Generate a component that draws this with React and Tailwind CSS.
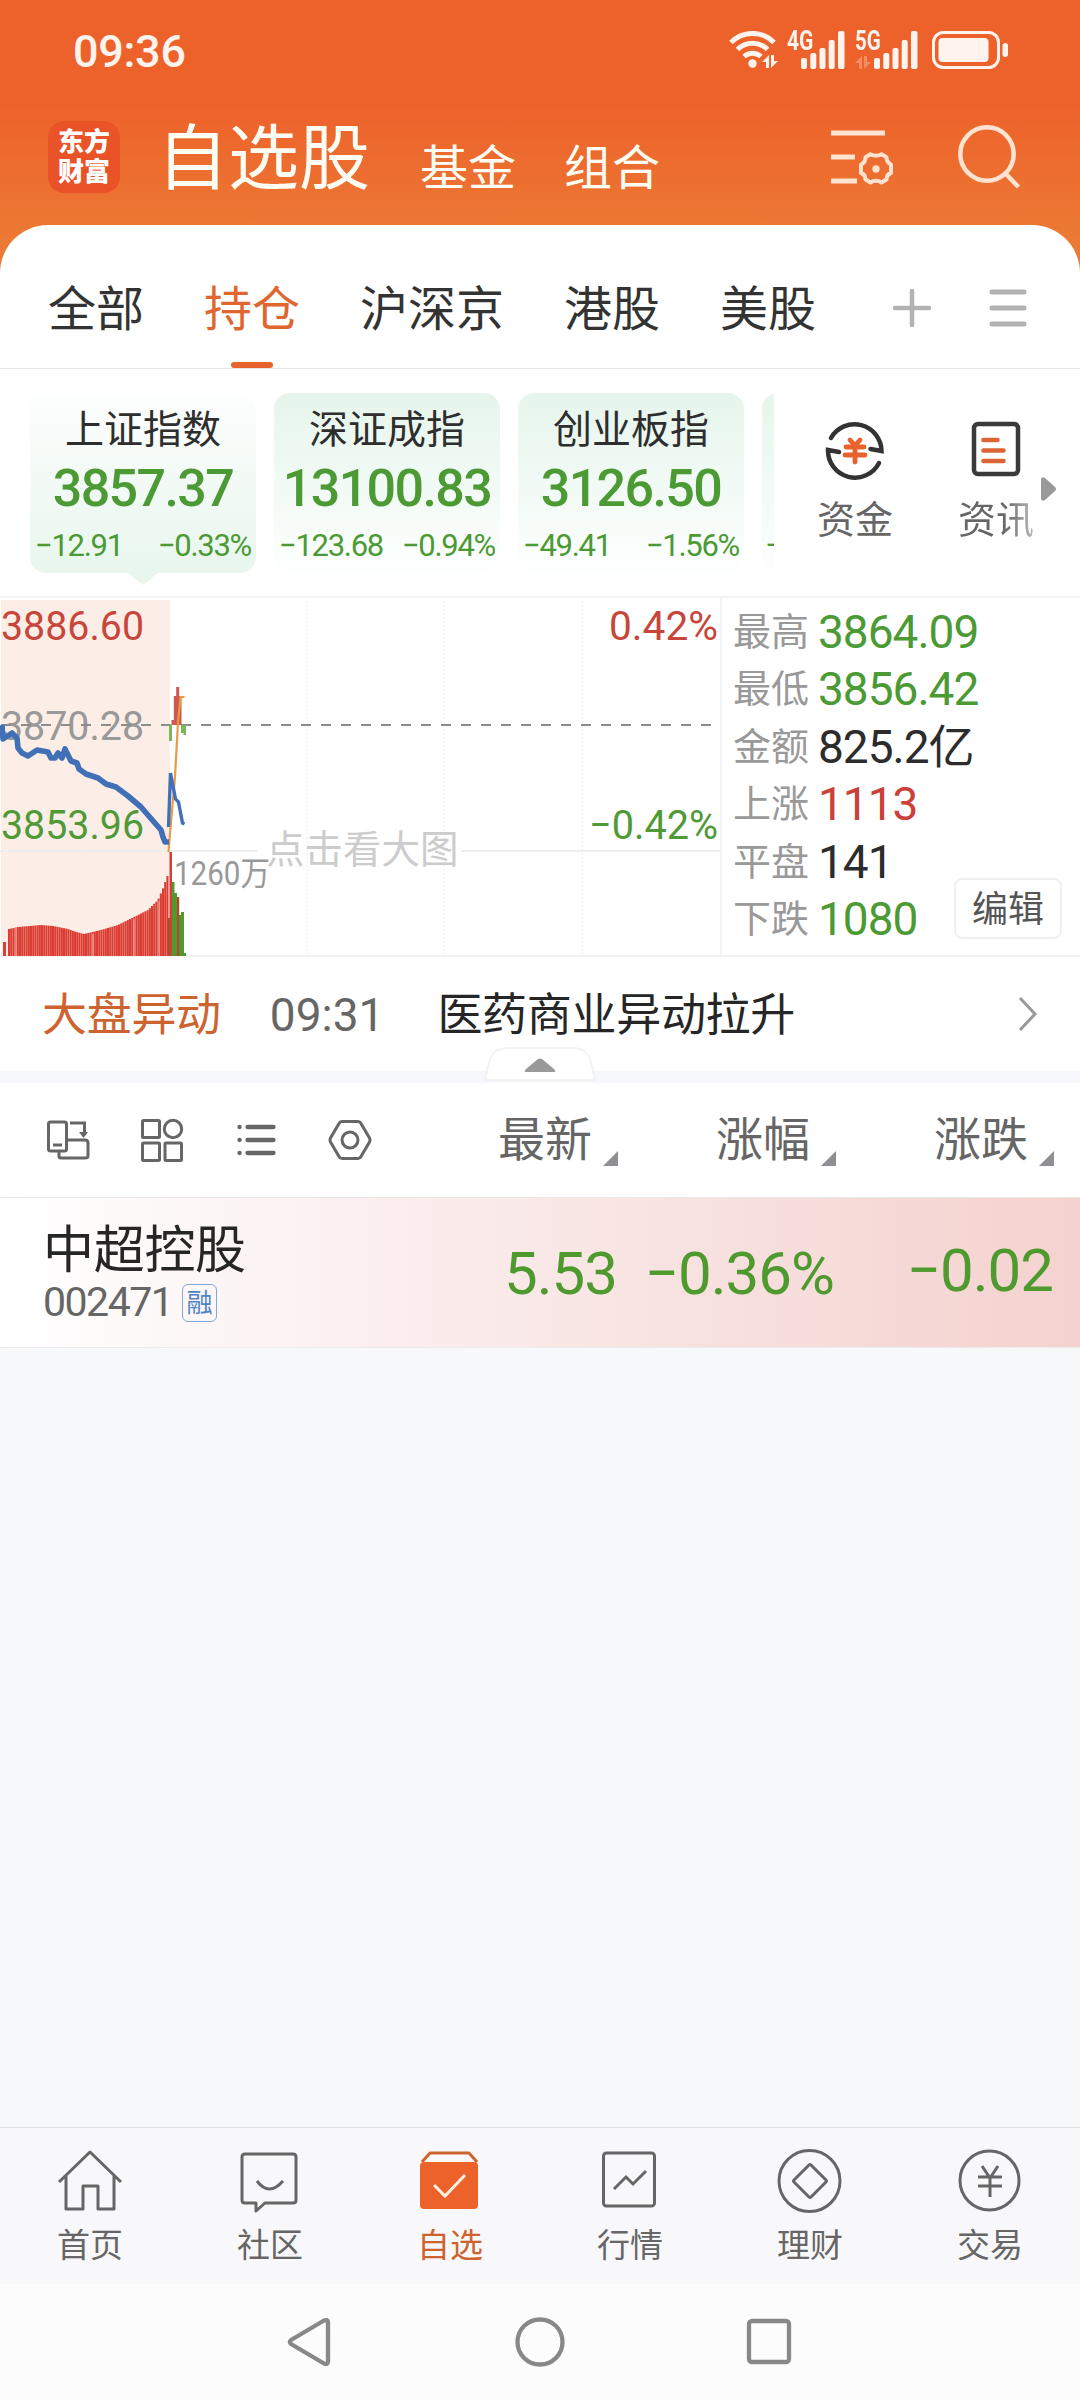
const TABS = ["全部", "持仓", "沪深京", "港股", "美股"];

const INDICES = [
  { name: "上证指数", value: "3857.37", change: "−12.91", pct: "−0.33%", active: true },
  { name: "深证成指", value: "13100.83", change: "−123.68", pct: "−0.94%" },
  { name: "创业板指", value: "3126.50", change: "−49.41", pct: "−1.56%" },
];

const STATS = [
  { label: "最高", value: "3864.09", color: "text-[#4b9a34]" },
  { label: "最低", value: "3856.42", color: "text-[#4b9a34]" },
  { label: "金额", value: "825.2亿", color: "text-[#2c2c2c]" },
  { label: "上涨", value: "1113", color: "text-[#cb4038]" },
  { label: "平盘", value: "141", color: "text-[#2c2c2c]" },
  { label: "下跌", value: "1080", color: "text-[#4b9a34]" },
];

const COLUMNS = ["最新", "涨幅", "涨跌"];

// Pre-open volume outline: [x, top]
const VOLUME = [
  [8, 331], [17, 329], [40, 327], [52, 328], [67, 331], [72, 333], [83, 336],
  [100, 332], [117, 327], [133, 319], [147, 312], [157, 302], [160, 295],
  [163, 288], [166, 278], [168, 278],
];

const volumeTop = (x) => {
  const i = VOLUME.findIndex(([vx]) => vx >= x);
  if (i <= 0) return VOLUME[0][1];
  const [x0, y0] = VOLUME[i - 1];
  const [x1, y1] = VOLUME[i];
  return y0 + ((y1 - y0) * (x - x0)) / (x1 - x0);
};

const BARS = Array.from({ length: 73 }, (_, i) => 8 + i * 2.2);

const SignalBars = () => (
  <svg width="44" height="38" viewBox="0 0 44 38" fill="#fff3ee">
    <rect x="0" y="27" width="6" height="11" rx="2" />
    <rect x="9.3" y="22" width="6" height="16" rx="2" />
    <rect x="18.5" y="17" width="6" height="21" rx="2" />
    <rect x="27.7" y="9" width="6" height="29" rx="2" />
    <rect x="37" y="0" width="6.5" height="38" rx="2" />
  </svg>
);

const DataArrows = ({ className }) => (
  <svg width="16" height="13" viewBox="0 0 16 13" fill="currentColor" className={className}>
    <path d="M7 0v13H4V7H0zM9 13V0h3v6h4z" />
  </svg>
);

function StatusBar() {
  return (
    <div className="flex h-[100px] items-center justify-between pl-[73px] pr-[71px] text-[#fff3ee]">
      <span className="mt-[2px] text-[45px] font-medium leading-none tracking-[-0.3px]">09:36</span>
      <div className="flex h-[38px] items-start">
        <div className="relative mr-[10px]">
          <svg width="48" height="38" viewBox="0 0 48 38" fill="none" stroke="#fff3ee" strokeWidth="5">
            <path d="M2 11.5a30 30 0 0 1 43 0" />
            <path d="M8.5 18.5a21 21 0 0 1 30 0" />
            <path d="M15 25.5a12.5 12.5 0 0 1 17 0" />
            <circle cx="23.5" cy="32.5" r="4.2" fill="#fff3ee" stroke="none" />
          </svg>
          <DataArrows className="absolute -right-px bottom-px" />
        </div>
        <div className="relative w-[58px] pl-[14px]">
          <span className="absolute left-0 top-0 origin-left scale-x-[0.78] text-[27px] font-bold leading-[20px]">
            4G
          </span>
          <SignalBars />
        </div>
        <div className="relative ml-[10px] w-[64px] pl-[19px]">
          <span className="absolute left-0 top-0 origin-left scale-x-[0.76] text-[27px] font-bold leading-[20px]">
            5G
          </span>
          <DataArrows className="absolute bottom-0 left-0 text-[#f68d62]" />
          <SignalBars />
        </div>
        <svg width="77" height="38" viewBox="0 0 77 38" className="ml-[13px]">
          <rect x="1.5" y="1.5" width="65" height="35" rx="10" fill="none" stroke="#fff3ee" strokeWidth="3" />
          <rect x="6.5" y="7" width="50" height="24" rx="4" fill="#fff3ee" />
          <rect x="70.5" y="12" width="5.5" height="14" rx="2.7" fill="#fff3ee" />
        </svg>
      </div>
    </div>
  );
}

function Header() {
  return (
    <header className="flex h-[125px] items-start pl-12 pt-[21px] text-[#fffdf3]">
      <div className="flex size-[72px] flex-col items-center justify-center rounded-2xl bg-[#ea5228] text-[26px] font-black leading-[30px] text-white">
        <span>东方</span>
        <span>财富</span>
      </div>
      <h1 className="ml-[37px] mt-[2px] text-[71px] leading-[72px]">自选股</h1>
      <span className="ml-[50px] mt-[24px] text-5xl leading-none">基金</span>
      <span className="ml-12 mt-[24px] text-5xl leading-none">组合</span>
      <svg width="64" height="58" viewBox="0 0 64 58" fill="none" stroke="#ffe3d0" strokeWidth="5" className="ml-[171px] mt-[7px]">
        <path d="M0 5h54M0 29h24M0 53h26" />
        <path
          d="M39.5 26.3q2.700 1.500 5.500 1.500t5.500-1.500l5 3q0 5 4.500 7.200v8.500q-4.500 1.500-4.500 6.500l-5 3q-2.500-1.700-5.500-1.700t-5.500 1.700l-5-3q0-5-4.500-6.500v-8.500q4.500-2 4.500-7.200z"
          strokeWidth="4"
          strokeLinejoin="round"
        />
        <circle cx="45" cy="41" r="3.7" fill="#ffe3d0" stroke="none" />
      </svg>
      <svg width="64" height="66" viewBox="0 0 64 66" fill="none" stroke="#ffe3d0" strokeWidth="4.5" className="ml-[63px] mt-[3px]">
        <circle cx="29" cy="30" r="26.7" />
        <path d="M47 49l13.5 14" />
      </svg>
    </header>
  );
}

function TabBar() {
  return (
    <div className="flex h-36 items-center border-b border-[#e6e6e6] pl-12 pt-[22px]">
      <div className="flex gap-[60px] pt-[4px]">
        {TABS.map((tab) => (
          <div
            key={tab}
            className={
              tab === "持仓"
                ? "relative text-5xl leading-none text-[#e0662f]"
                : "text-5xl leading-none text-[#333]"
            }
          >
            {tab}
            {tab === "持仓" && (
              <span className="absolute -bottom-[34px] left-[27px] h-[6px] w-[42px] rounded-full bg-[#e8622e]" />
            )}
          </div>
        ))}
      </div>
      <svg width="40" height="40" viewBox="0 0 40 40" stroke="#b2b2b2" strokeWidth="4.5" strokeLinecap="round" className="ml-[76px]">
        <path d="M20 3v34M3 20h34" />
      </svg>
      <svg width="38" height="40" viewBox="0 0 38 40" stroke="#b2b2b2" strokeWidth="5" strokeLinecap="round" className="ml-[57px]">
        <path d="M3 4h32M3 20h32M3 36h32" />
      </svg>
    </div>
  );
}

function IndexCard({ name, value, change, pct, active }) {
  return (
    <div
      className={`relative flex h-[180px] w-[226px] shrink-0 flex-col items-center rounded-2xl ${
        active
          ? "bg-linear-to-b from-[#fdfefe] to-[#e8f6ed]"
          : "bg-linear-to-b from-[#e6f5ec] to-[#fdfffe]"
      }`}
    >
      <span className="mt-[18px] text-[39px] leading-none text-[#2e2e2e]">{name}</span>
      <span className="mt-[13px] text-[52px] font-medium leading-[52px] tracking-[-1.6px] text-[#4b9a34]">
        {value}
      </span>
      <div className="mt-[15px] flex w-full justify-between whitespace-nowrap px-[5px] text-[31px] leading-none tracking-[-1.3px] text-[#4b9a34]">
        <span>{change}</span>
        <span>{pct}</span>
      </div>
      {active && (
        <svg width="30" height="12" viewBox="0 0 30 12" className="absolute -bottom-[12px] left-[98px]">
          <path d="M0 0h30L15 12z" fill="#e8f6ed" />
        </svg>
      )}
    </div>
  );
}

function IndexStrip() {
  return (
    <div className="flex h-[227px] pt-6">
      <div className="flex w-[774px] gap-[18px] overflow-hidden pl-[30px]">
        {INDICES.map((item) => (
          <IndexCard key={item.name} {...item} />
        ))}
        <div className="h-[180px] w-[226px] shrink-0 rounded-2xl bg-linear-to-b from-[#e6f5ec] to-[#fdfffe] pl-[5px] pt-[135px] text-[31px] leading-none text-[#4b9a34]">
          -
        </div>
      </div>

      <div className="ml-[42px] flex w-[78px] flex-col items-center pt-[27px]">
        <svg width="60" height="62" viewBox="0 0 60 62" fill="none" stroke="#333" strokeWidth="4.500" strokeLinecap="round">
          <path d="M6 18A27 27 0 0 1 56.5 31l-11-2" strokeLinejoin="miter" />
          <path d="M54 43A27 27 0 0 1 3 30l11 2" strokeLinejoin="miter" />
          <g stroke="#e8622e" strokeWidth="4.8">
            <path d="M25 20l5 5.5 5-5.500M21 27h18M20 35h20M30 27v15" />
          </g>
        </svg>
        <span className="mt-[19px] text-[38px] leading-none text-[#666]">资金</span>
      </div>
      <div className="ml-[63px] flex w-[78px] flex-col items-center pt-[28px]">
        <svg width="50" height="56" viewBox="0 0 50 56" fill="none" strokeLinecap="round">
          <rect x="3" y="3" width="44" height="50" rx="4" stroke="#3a3a3a" strokeWidth="4.5" />
          <path d="M12.5 19h14M12.5 29.500h20M12.5 40h20" stroke="#dd6436" strokeWidth="4.5" />
        </svg>
        <span className="mt-[24px] bg-linear-to-r from-[#666] from-60% to-[#bbb] bg-clip-text text-[38px] leading-none text-transparent">
          资讯
        </span>
      </div>
      <svg width="16" height="26" viewBox="0 0 16 26" className="ml-[6px] mt-[83px]">
        <path d="M0 3q1-3 4-1l10 9q2 2 0 4L4 24q-3 2-4-1z" fill="#999" />
      </svg>
    </div>
  );
}

function MinuteChart() {
  return (
    <svg width="720" height="358" viewBox="0 0 720 358" className="shrink-0">
      <rect x="1" y="2" width="169" height="355" fill="#fceee6" />
      <g stroke="#ededed" strokeDasharray="2 2">
        <path d="M87 3v355M307 3v355M444.5 3v355M582.5 3v355" />
      </g>
      <path d="M0 253h257M461 253h259" stroke="#eee" strokeWidth="2" />

      <g fontSize="41">
        <text x="1" y="42" fill="#c8453b" textLength="143" lengthAdjust="spacingAndGlyphs">3886.60</text>
        <text x="1" y="142" fill="#999" textLength="143" lengthAdjust="spacingAndGlyphs">3870.28</text>
        <text x="1" y="241" fill="#4f9a36" textLength="143" lengthAdjust="spacingAndGlyphs">3853.96</text>
        <text x="609" y="42" fill="#c8453b" textLength="109" lengthAdjust="spacingAndGlyphs">0.42%</text>
        <text x="589" y="241" fill="#4f9a36" textLength="129" lengthAdjust="spacingAndGlyphs">−0.42%</text>
      </g>
      <path d="M1 127h714" stroke="#8c8c8c" strokeWidth="2" strokeDasharray="10 10" />

      {/* volume */}
      <g fill="#db3d33">
        <rect x="3" y="344" width="3" height="14" />
        {BARS.map((x) => (
          <rect key={x} x={x} y={volumeTop(x)} width="2.08" height={358 - volumeTop(x)} />
        ))}
      </g>
      <path d="M15.500 330h1v28h-1zM92.500 336h1v22h-1zM133.500 321h1v37h-1zM158.500 303h1v55h-1z" fill="#f6b5ac" />
      <rect x="168" y="320" width="2" height="38" fill="#8a5a28" />
      <rect x="169.500" y="254" width="2.500" height="104" fill="#d83c34" />
      <path d="M172 284h2.500v11h2.500v63h-5zM179 317h2v-3h3v44h-5zM184 355h2v3h-2z" fill="#4f9a2c" />
      <path d="M177 299h2.200v59H177z" fill="#b8452c" />

      {/* deviation bars */}
      <path d="M171.500 122h2.300V98h2.400v-9h3v9h2.300v29h-10z" fill="#cf5850" />
      <path d="M169 127h3v16h-3zM181 127h2.500v8H181zM183.500 127h2.500v10h-2.500z" fill="#78b65a" />

      <path d="M168.500 254l2.500-30 4-45 3-55 2.500-25h4" fill="none" stroke="#eb9a43" strokeWidth="2.200" />
      <path
        d="M2 127l1 14 9-6 5 5 1 10 4 5 6 3 9-6 11 2 3 6h4l3-5 4 5 3-9 6 12 6 2 2 6 7 5 12 4 8 6 10 3 12 9 13 11 13 15 7 8 2 7 2 5h4"
        fill="none"
        stroke="#4270b6"
        strokeWidth="5.600"
        strokeLinejoin="round"
      />
      <path d="M168.500 229l2-54 5 26 3 3 4 21 2 1" fill="none" stroke="#4270b6" strokeWidth="3.400" />

      <text x="174" y="287" fontSize="33" fill="#999" textLength="96" lengthAdjust="spacingAndGlyphs">1260万</text>
      <text x="266" y="265" fontSize="38.5" fill="#ccc">点击看大图</text>
    </svg>
  );
}

function MarketPanel() {
  return (
    <div className="flex h-[361px] border-y-2 border-[#f2f2f2]">
      <MinuteChart />
      <div className="relative flex-1 border-l-2 border-[#f3f3f3] pl-[11px] pt-[5px]">
        {STATS.map((s) => (
          <div key={s.label} className="flex h-[57.5px] items-center">
            <span className="w-[85px] text-[38px] leading-none text-[#999]">{s.label}</span>
            <span className={`text-[46px] leading-none tracking-[-1px] ${s.color}`}>{s.value}</span>
          </div>
        ))}
        <button className="absolute bottom-[16px] right-[18px] flex h-[61px] w-[108px] items-center justify-center rounded-lg border-2 border-[#f0f0f0] bg-white pt-[3px] text-[36px] leading-none text-[#555]">
          编辑
        </button>
      </div>
    </div>
  );
}

function NewsRow() {
  return (
    <div className="relative flex h-[126px] items-start border-b-12 border-[#f6f8fb] pl-[42px] pt-[36px]">
      <span className="text-[45px] leading-none tracking-[-0.3px] text-[#cd642f]">大盘异动</span>
      <span className="ml-[49px] -mt-px text-[46px] leading-none text-[#666]">09:31</span>
      <span className="ml-[53px] text-[45px] leading-none tracking-[-0.3px] text-[#262626]">医药商业异动拉升</span>
      <svg width="20" height="36" viewBox="0 0 20 36" fill="none" stroke="#999" strokeWidth="3" className="ml-auto mr-[42px] mt-[3px]">
        <path d="M2 2l15 16L2 34" />
      </svg>
      {/* collapse handle */}
      <svg width="112" height="36" viewBox="0 0 112 36" className="absolute -bottom-[11px] left-[484px]">
        <path d="M1 34C5 14 6 2 24 2h65c17 0 18 12 22 32z" fill="#fff" stroke="#f2f2f3" strokeWidth="2" />
        <path d="M41 26q-1-1 1-3l12-10q2-1 4 0l12 10q2 2 1 3z" fill="#999" />
      </svg>
    </div>
  );
}

function ListToolbar() {
  return (
    <div className="flex h-[115px] items-center border-b border-[#e8e8e8] pl-[46px] text-[#666]">
      <div className="flex items-center">
        <svg width="44" height="44" viewBox="0 0 44 44" fill="none" stroke="currentColor" strokeWidth="3">
          <rect x="2.500" y="4" width="18" height="29" rx="2" />
          <path d="M7 27h9M24 5h14.500v12" />
          <path d="M33 14h9l-4.500 6z" fill="currentColor" stroke="none" />
          <path d="M20.500 22H39q3 0 3 3v13q0 2-3 2H15q-2 0-2-2v-5" />
        </svg>
        <svg width="44" height="44" viewBox="0 0 44 44" fill="none" stroke="currentColor" strokeWidth="3" className="ml-[50px]">
          <rect x="2.500" y="2.500" width="17" height="17" rx="1" />
          <circle cx="33" cy="11" r="8.700" />
          <rect x="2.500" y="25" width="17" height="17.500" rx="1" />
          <rect x="25" y="25" width="16.500" height="17.500" rx="1" />
        </svg>
        <svg width="40" height="36" viewBox="0 0 40 36" fill="none" stroke="currentColor" strokeWidth="4.300" strokeLinecap="round" className="ml-[52px]">
          <path d="M11.500 5h26M11.500 18h26M11.500 31h26M3.500 5h.1M3.500 18h.1M3.500 31h.1" />
        </svg>
        <svg width="44" height="42" viewBox="0 0 44 42" fill="none" stroke="currentColor" strokeWidth="3" className="ml-[52px]">
          <path d="M14 2.500h16q2 0 3 2l8.500 14.500q1 2 0 4L33 37.500q-1 2-3 2H14q-2 0-3-2L2.500 23q-1-2 0-4L11 4.500q1-2 3-2z" />
          <circle cx="22" cy="21" r="8" />
        </svg>
      </div>
      <div className="ml-[126px] flex">
        {COLUMNS.map((col) => (
          <div key={col} className="flex w-[218px] items-end">
            <span className="mb-px text-[47px] leading-none">{col}</span>
            <svg width="15" height="15" viewBox="0 0 15 15" className="-mb-[2px] ml-[11px]">
              <path d="M15 0v15H0z" fill="#8e8e93" />
            </svg>
          </div>
        ))}
      </div>
    </div>
  );
}

function StockRow() {
  return (
    <div className="flex h-[150px] items-center border-b border-[#ececee] bg-linear-to-r from-white via-[#f9e8e7] to-[#f4d2cf]">
      <div className="w-[400px] pl-[43px] pt-[3px]">
        <div className="text-[51px] leading-none tracking-[-0.3px] text-[#262626]">中超控股</div>
        <div className="mt-[6px] flex items-center">
          <span className="w-[128px] text-[41px] leading-none tracking-[-1.5px] text-[#666]">002471</span>
          <span className="ml-[11px] flex h-[38px] w-[35px] items-center justify-center rounded-md border border-[#7ea6dc] pt-px text-[26px] leading-none text-[#4f84c8]">
            融
          </span>
        </div>
      </div>
      <div className="flex flex-1 pt-[3px] text-[60px] leading-none tracking-[-1px] text-[#4f9a2f]">
        <span className="w-[217px] text-right">5.53</span>
        <span className="w-[217px] text-right">−0.36%</span>
        <span className="-mt-[3px] w-[219px] text-right">−0.02</span>
      </div>
    </div>
  );
}

const NAV_ITEMS = [
  {
    label: "首页",
    icon: (
      <path d="M2 34L33 4l31 30M9 27v34h17V38h15v23h16V27" strokeLinejoin="round" />
    ),
  },
  {
    label: "社区",
    icon: (
      <>
        <path d="M8 6h48q3 0 3 3v43q0 3-3 3H28l-9 8v-8H8q-3 0-3-3V9q0-3 3-3z" strokeLinejoin="round" />
        <path d="M20 33q12 16 26 0" />
      </>
    ),
  },
  {
    label: "自选",
    active: true,
    icon: (
      <>
        <path d="M5 14l8-9h39l8 9" strokeLinejoin="round" />
        <rect x="3" y="14" width="58" height="47" rx="4" fill="#ed622b" stroke="none" />
        <path d="M17 37l11 11 20-21" stroke="#fff0e2" />
      </>
    ),
  },
  {
    label: "行情",
    icon: (
      <>
        <rect x="6.500" y="5" width="51" height="53" rx="3" />
        <path d="M17 41l12-12 7 7 13-13" />
      </>
    ),
  },
  {
    label: "理财",
    icon: (
      <>
        <circle cx="32.500" cy="33" r="30.500" />
        <path d="M32 17q1-1 2 0l15 15q1 1 0 2L34 49q-1 1-2 0L17 34q-1-1 0-2z" />
      </>
    ),
  },
  {
    label: "交易",
    icon: (
      <>
        <circle cx="32.500" cy="32.500" r="29.500" />
        <path d="M25 18l8 12 8-12M21 29h24M21 38h24M33 29v20" />
      </>
    ),
  },
];

function BottomNav() {
  return (
    <nav className="flex h-[157px] border-t border-[#e3e3e5] bg-[#f8f8fa]">
      {NAV_ITEMS.map(({ label, icon, active }) => (
        <div
          key={label}
          className={`flex w-[180px] flex-col items-center pt-[20px] ${
            active ? "text-[#cd642f]" : "text-[#666]"
          }`}
        >
          <svg width="66" height="66" viewBox="0 0 66 66" fill="none" stroke="currentColor" strokeWidth="3">
            {icon}
          </svg>
          <span className="mt-[15px] text-[33px] leading-none">{label}</span>
        </div>
      ))}
    </nav>
  );
}

function SystemNav() {
  return (
    <div className="flex h-[116px] items-start bg-[#fcfcfc] pl-[287px] pt-[33px]">
      <svg width="505" height="50" viewBox="0 0 505 50" fill="none" stroke="#888" strokeWidth="4.300" strokeLinejoin="round">
        <path d="M4 23L37 3.500q4-1.500 4 2v39q0 3.500-4 2L4 27q-2-2 0-4z" />
        <circle cx="253" cy="25" r="22.500" />
        <rect x="462" y="4" width="40" height="41" rx="3" />
      </svg>
    </div>
  );
}

export default function App() {
  return (
    <div className="flex h-[2400px] w-[1080px] flex-col overflow-hidden bg-[#f7f8fa] font-['Roboto','Noto_Sans_CJK_SC',sans-serif]">
      <div className="bg-linear-to-b from-[#ed622b] from-[105px] to-[#ec7934] to-[240px]">
        <StatusBar />
        <Header />
        <main className="rounded-t-[48px] bg-white">
          <TabBar />
          <IndexStrip />
          <MarketPanel />
          <NewsRow />
          <ListToolbar />
        </main>
      </div>
      <StockRow />
      <div className="flex-1" />
      <BottomNav />
      <SystemNav />
    </div>
  );
}
